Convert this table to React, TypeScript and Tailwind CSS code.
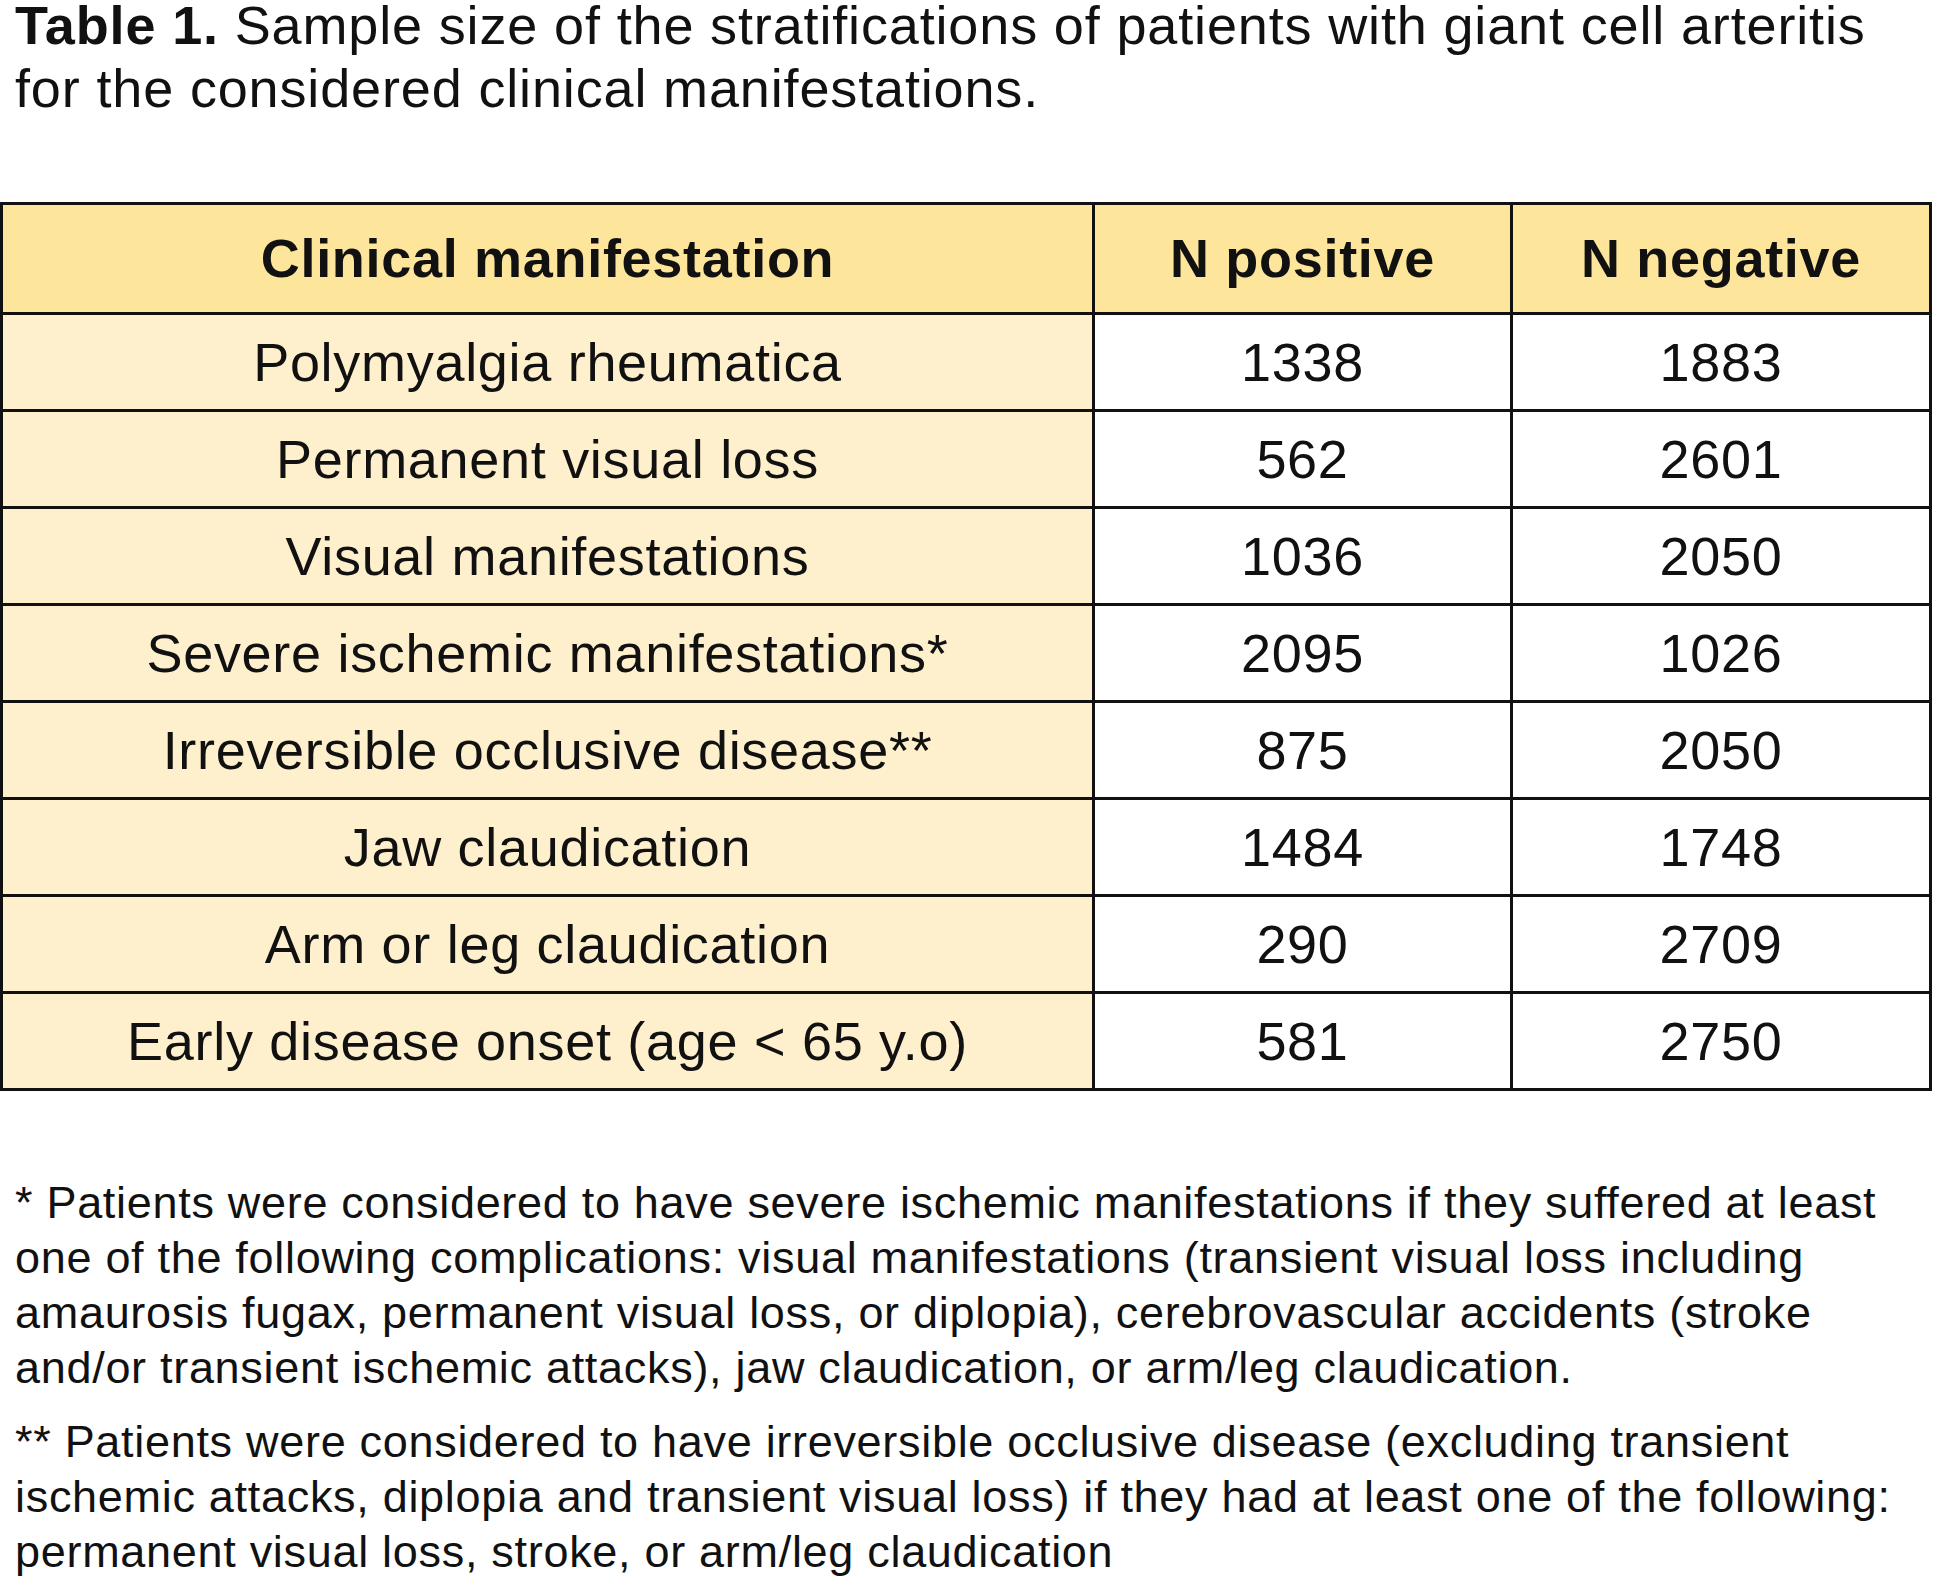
const rows: [string, number, number][] = [
  ['Polymyalgia rheumatica', 1338, 1883],
  ['Permanent visual loss', 562, 2601],
  ['Visual manifestations', 1036, 2050],
  ['Severe ischemic manifestations*', 2095, 1026],
  ['Irreversible occlusive disease**', 875, 2050],
  ['Jaw claudication', 1484, 1748],
  ['Arm or leg claudication', 290, 2709],
  ['Early disease onset (age < 65 y.o)', 581, 2750],
];

export default function App() {
  return (
    <div className="w-[1934px] min-h-[1579px] bg-white text-[#111] font-['Liberation_Sans',Arial,sans-serif]">
      {/* Caption */}
      <div className="pl-[15px] text-[54px] tracking-[0.85px]">
        <p className="leading-[50px]">
          <span className="font-bold">Table 1.</span> Sample size of the stratifications of patients with giant cell arteritis
        </p>
        <p className="leading-[76px]">for the considered clinical manifestations.</p>
      </div>

      {/* Table */}
      <div className="mt-[76px] grid w-[1932px] grid-cols-[1092px_418px_419px] border-l-[3px] border-t-[3px] border-[#111] text-center text-[54px] tracking-[0.7px]">
        <div className="flex h-[110px] items-center justify-center border-b-[3px] border-r-[3px] border-[#111] bg-[#fde59b] font-bold">
          Clinical manifestation
        </div>
        <div className="flex h-[110px] items-center justify-center border-b-[3px] border-r-[3px] border-[#111] bg-[#fde59b] font-bold">
          N positive
        </div>
        <div className="flex h-[110px] items-center justify-center border-b-[3px] border-r-[3px] border-[#111] bg-[#fde59b] font-bold">
          N negative
        </div>
        {rows.map(([label, pos, neg]) => (
          <div key={label} className="contents">
            <div className="flex h-[97px] items-center justify-center border-b-[3px] border-r-[3px] border-[#111] bg-[#fff0cd]">
              {label}
            </div>
            <div className="flex h-[97px] items-center justify-center border-b-[3px] border-r-[3px] border-[#111] bg-white">
              {pos}
            </div>
            <div className="flex h-[97px] items-center justify-center border-b-[3px] border-r-[3px] border-[#111] bg-white">
              {neg}
            </div>
          </div>
        ))}
      </div>

      {/* Footnotes */}
      <div className="mt-[84px] pl-[15px] text-[45px] leading-[55px] tracking-[0.7px]">
        <p>
          * Patients were considered to have severe ischemic manifestations if they suffered at least
          <br />
          one of the following complications: visual manifestations (transient visual loss including
          <br />
          amaurosis fugax, permanent visual loss, or diplopia), cerebrovascular accidents (stroke
          <br />
          and/or transient ischemic attacks), jaw claudication, or arm/leg claudication.
        </p>
        <p className="mt-[19px]">
          ** Patients were considered to have irreversible occlusive disease (excluding transient
          <br />
          ischemic attacks, diplopia and transient visual loss) if they had at least one of the following:
          <br />
          permanent visual loss, stroke, or arm/leg claudication
        </p>
      </div>
    </div>
  );
}
